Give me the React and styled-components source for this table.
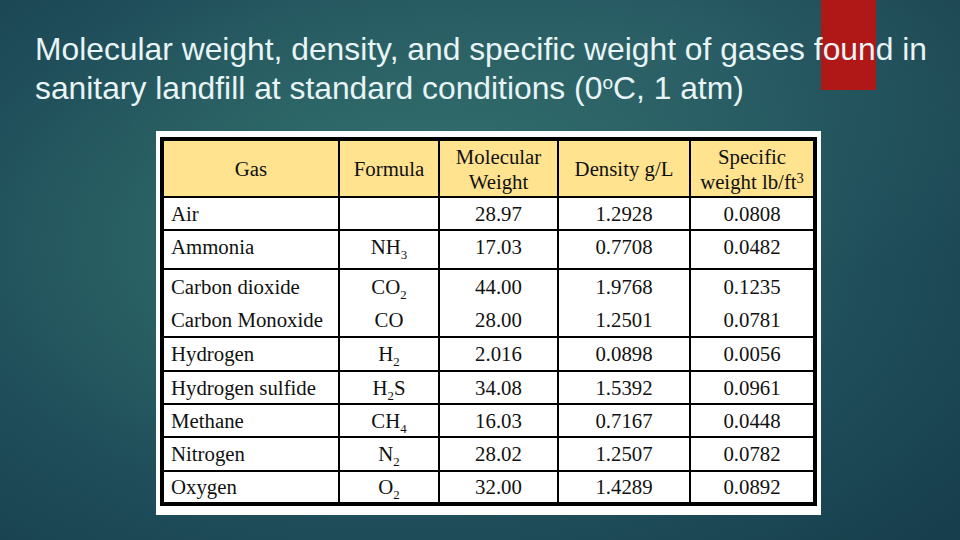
import React from "react";
import styled, { createGlobalStyle } from "styled-components";

const Global = createGlobalStyle`
  html, body { margin: 0; padding: 0; }
  body { width: 960px; height: 540px; overflow: hidden; }
`;

const Slide = styled.div`
  position: relative;
  width: 960px;
  height: 540px;
  overflow: hidden;
  display: flex;
  flex-direction: column;
  background:
    radial-gradient(ellipse 60% 45% at 68% 8%, rgba(60, 120, 120, 0.35) 0%, rgba(60,120,120,0) 100%),
    radial-gradient(ellipse 75% 80% at 42% 45%, #36756f 0%, #2a6264 35%, #1f4e5a 65%, #173e4c 100%);
`;

const Accent = styled.div`
  position: absolute;
  top: 0;
  left: 821px;
  width: 55px;
  height: 90px;
  background: #b01818;
`;

const Title = styled.h1`
  position: relative;
  margin: 0;
  padding: 30px 0 0 35px;
  width: 905px;
  font-family: "Liberation Sans", Arial, sans-serif;
  font-weight: normal;
  font-size: 31.8px;
  line-height: 39px;
  color: #e8f4f6;
`;

const Deg = styled.sup`
  font-size: 0.6em;
  line-height: 0;
  vertical-align: 0.55em;
`;

const Frame = styled.div`
  align-self: flex-start;
  margin: 23px 0 0 156px;
  padding: 6px 4px 9px 4px;
  background: #ffffff;
`;

const Table = styled.table`
  border-collapse: collapse;
  table-layout: fixed;
  width: 657px;
  border: 4px solid #000;
  font-family: "Liberation Serif", "Times New Roman", serif;
  font-size: 20.8px;
  color: #111;
`;

const HeadRow = styled.tr`
  height: 58px;
  background: #ffe38f;
`;

const Row = styled.tr`
  height: ${(p) => p.$h}px;
  background: #fff;
`;

const Th = styled.th`
  font-weight: normal;
  line-height: 25px;
  text-align: center;
  vertical-align: middle;
  border: 2px solid #000;
  padding: 0 4px;
`;

const Td = styled.td`
  border: 2px solid #000;
  line-height: ${(p) => (p.$double ? 33 : 26)}px;
  text-align: ${(p) => (p.$left ? "left" : "center")};
  padding: 0 0 ${(p) => p.$pb || 0}px ${(p) => (p.$left ? 7 : 0)}px;
  vertical-align: middle;
  white-space: nowrap;
`;

const Sub = styled.sub`
  font-size: 0.62em;
  line-height: 0;
  vertical-align: -0.35em;
`;

const Sup = styled.sup`
  font-size: 0.7em;
  line-height: 0;
  vertical-align: 0.4em;
`;

const f = (base, sub, tail = "") => (
  <>
    {base}
    {sub && <Sub>{sub}</Sub>}
    {tail}
  </>
);

const rows = [
  { h: 33, gas: ["Air"], formula: [null], mw: ["28.97"], d: ["1.2928"], sw: ["0.0808"] },
  { h: 39, pb: 5, gas: ["Ammonia"], formula: [f("NH", "3")], mw: ["17.03"], d: ["0.7708"], sw: ["0.0482"] },
  {
    h: 68,
    gas: ["Carbon dioxide", "Carbon Monoxide"],
    formula: [f("CO", "2"), "CO"],
    mw: ["44.00", "28.00"],
    d: ["1.9768", "1.2501"],
    sw: ["0.1235", "0.0781"],
  },
  { h: 34, gas: ["Hydrogen"], formula: [f("H", "2")], mw: ["2.016"], d: ["0.0898"], sw: ["0.0056"] },
  { h: 33, gas: ["Hydrogen sulfide"], formula: [f("H", "2", "S")], mw: ["34.08"], d: ["1.5392"], sw: ["0.0961"] },
  { h: 33, gas: ["Methane"], formula: [f("CH", "4")], mw: ["16.03"], d: ["0.7167"], sw: ["0.0448"] },
  { h: 34, gas: ["Nitrogen"], formula: [f("N", "2")], mw: ["28.02"], d: ["1.2507"], sw: ["0.0782"] },
  { h: 33, gas: ["Oxygen"], formula: [f("O", "2")], mw: ["32.00"], d: ["1.4289"], sw: ["0.0892"] },
];

const Lines = ({ items }) =>
  items.map((it, i) => (
    <React.Fragment key={i}>
      {i > 0 && <br />}
      {it}
    </React.Fragment>
  ));

export default function App() {
  return (
    <>
      <Global />
      <Slide>
        <Accent />
        <Title>
          Molecular weight, density, and specific weight of gases found in sanitary landfill at
          standard conditions (0<Deg>o</Deg>C, 1 atm)
        </Title>
        <Frame>
          <Table>
            <colgroup>
              <col style={{ width: 177 }} />
              <col style={{ width: 100 }} />
              <col style={{ width: 119 }} />
              <col style={{ width: 132 }} />
              <col style={{ width: 125 }} />
            </colgroup>
            <thead>
              <HeadRow>
                <Th>Gas</Th>
                <Th>Formula</Th>
                <Th>
                  Molecular
                  <br />
                  Weight
                </Th>
                <Th>Density g/L</Th>
                <Th>
                  Specific
                  <br />
                  weight lb/ft<Sup>3</Sup>
                </Th>
              </HeadRow>
            </thead>
            <tbody>
              {rows.map((r, i) => {
                const dbl = r.gas.length > 1;
                return (
                  <Row key={i} $h={r.h}>
                    <Td $left $double={dbl} $pb={r.pb}>
                      <Lines items={r.gas} />
                    </Td>
                    <Td $double={dbl} $pb={r.pb}>
                      <Lines items={r.formula} />
                    </Td>
                    <Td $double={dbl} $pb={r.pb}>
                      <Lines items={r.mw} />
                    </Td>
                    <Td $double={dbl} $pb={r.pb}>
                      <Lines items={r.d} />
                    </Td>
                    <Td $double={dbl} $pb={r.pb}>
                      <Lines items={r.sw} />
                    </Td>
                  </Row>
                );
              })}
            </tbody>
          </Table>
        </Frame>
      </Slide>
    </>
  );
}
